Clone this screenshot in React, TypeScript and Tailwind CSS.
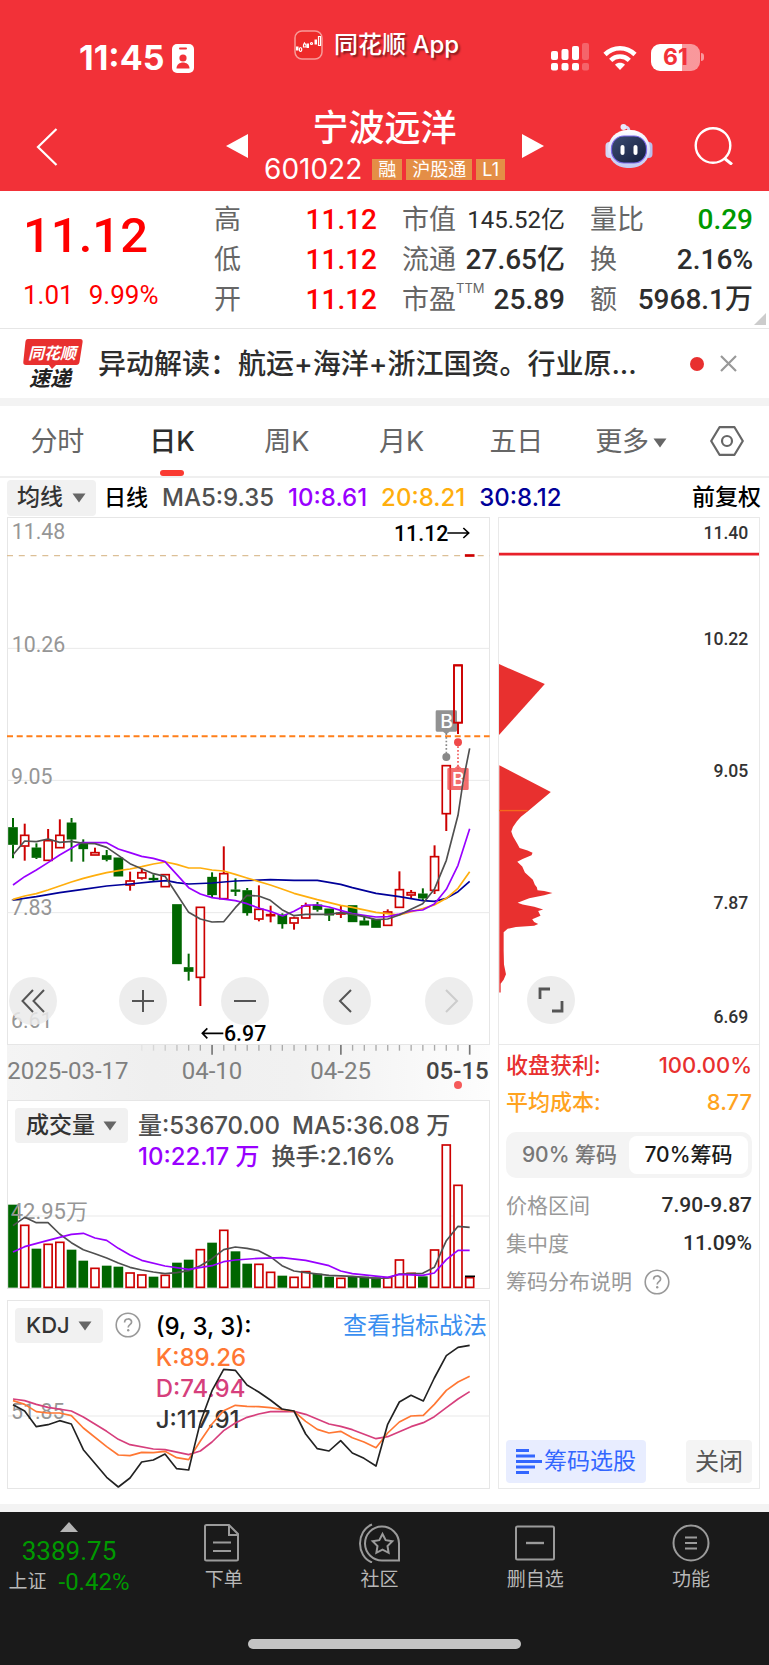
import React from "react";

type Candle = { up: boolean; top: number; bottom: number; high?: number; low?: number };
type Bar = { up: boolean; top: number };

const RED = "#cc0000";
const GREEN = "#006600";
const STEP = 35.13;
const xAt = (i: number) => 39 + STEP * i;

const up = (top: number, bottom: number, high?: number, low?: number): Candle => ({ up: true, top, bottom, high, low });
const down = (top: number, bottom: number, high?: number, low?: number): Candle => ({ up: false, top, bottom, high, low });

const candles: Candle[] = [
  down(142, 194, 114, 235), up(165, 199, 131, 242), down(203, 233, 190, 237), up(181, 242, 147), up(165, 204, 118),
  down(128, 178, 114, 245), down(192, 207, 178, 245), up(217, 226, 203), down(226, 239, 210, 244), down(233, 289),
  up(302, 316, 275, 332), up(277, 295, 265, 299), down(294, 299, 283, 303), up(283, 321), down(373, 552),
  down(562, 575, 521, 602), up(381, 593, undefined, 678), down(291, 345, 277, 351), up(280, 357, 199), down(329, 334, 295, 348),
  down(331, 399, 324, 407), up(387, 418, 316, 424), up(403, 408, 377, 427), down(404, 432, 400, 446), up(413, 430, 410, 449),
  up(377, 415, 368), down(374, 389, 366, 395), down(386, 406, undefined, 423), up(399, 403, 378, 414), down(376, 426),
  down(422, 436, 410), down(418, 443), up(395, 437, 388), up(328, 383, 274), up(337, 346, 330, 355),
  down(341, 355, 325, 362), up(229, 332, 196, 342), up(-44, 102, undefined, 153), up(-344, -171, undefined, -138), up(-676, -671),
];

const vol = (spec: string): Bar[] =>
  spec.split(" ").map((s) => ({ up: s[0] === "r", top: Number(s.slice(1)) }));

const volumes = vol(
  "g342 r403 g474 r460 r454 g477 g510 r532 g525 g528 r546 r552 g558 r553 g516 g507 r476 g456 r418 g482 g519 r520 r544 g555 r559 r542 g549 g558 r562 g558 g558 g560 r560 r507 r547 g557 r477 r162 r283 r560"
);

const ma5 = "39,224 74,183 109,185 144,177 179,187 214,184 250,190 285,191 320,202 355,226 390,251 425,266 460,281 495,289 530,342 566,397 601,417 636,426 671,425 706,383 741,346 776,348 811,361 846,389 882,407 917,403 987,403 1022,398 1057,403 1092,410 1128,419 1163,417 1198,405 1233,388 1268,371 1303,328 1339,241 1374,106 1390,0 1409,-95";
const ma10 = "39,315 74,290 109,270 144,248 179,225 214,205 243,188 320,188 355,207 390,218 425,229 460,235 495,245 530,283 566,323 601,342 636,353 706,362 741,371 776,384 811,394 848,408 882,394 917,375 952,375 987,381 1022,391 1057,401 1092,406 1128,411 1163,410 1198,402 1233,393 1268,390 1303,372 1339,328 1374,256 1409,146";
const ma20 = "39,358 74,348 109,341 144,330 179,318 214,306 250,295 285,286 320,278 355,272 390,267 425,260 460,252 497,246 530,253 566,264 601,264 636,270 671,273 706,283 741,294 811,315 846,327 882,340 952,359 1022,376 1057,382 1128,397 1163,401 1198,405 1268,386 1303,375 1339,355 1374,325 1409,275";
const ma30 = "39,360 109,350 179,338 249,328 320,318 390,312 460,305 500,302 530,308 566,312 636,309 706,303 811,299 882,301 952,301 1022,313 1057,323 1128,340 1198,350 1268,362 1303,364 1339,355 1374,335 1409,304";
const vol5 = "39,405 74,380 109,396 144,396 179,430 214,456 250,477 285,489 320,502 355,517 390,530 425,538 460,544 495,549 530,546 566,540 601,525 636,504 671,477 706,469 741,473 776,480 811,498 846,525 882,541 917,546 987,554 1057,557 1128,563 1163,562 1198,550 1268,548 1303,530 1339,450 1374,407 1409,410";
const vol10 = "39,484 74,468 144,449 214,431 250,428 285,442 320,449 355,473 390,493 425,509 495,526 566,536 636,525 671,513 706,508 776,503 846,501 917,509 987,525 1022,541 1057,549 1163,560 1198,551 1268,554 1303,547 1339,507 1374,479 1409,479";
const kdjJ = "39,342 74,361 109,408 144,402 179,390 214,400 250,477 320,560 355,589 390,562 425,514 460,508 495,490 530,534 566,538 580,480 601,395 636,300 671,236 706,239 741,283 776,304 811,328 846,355 882,361 917,430 952,474 987,481 1022,450 1057,487 1092,503 1128,526 1163,401 1198,334 1233,314 1270,331 1303,262 1339,195 1374,170 1409,164";
const kdjK = "39,330 74,341 109,363 144,367 179,367 214,375 250,412 320,468 355,493 390,495 425,485 460,486 495,482 530,501 566,507 601,451 636,400 671,360 706,344 741,347 776,348 811,351 882,362 917,392 952,416 987,427 1022,422 1057,441 1092,454 1128,471 1163,427 1198,394 1233,376 1270,374 1303,341 1339,299 1374,274 1409,257";
const kdjD = "39,325 74,330 109,341 144,350 214,361 250,379 320,422 355,446 390,462 460,475 495,477 566,492 601,481 636,454 671,420 706,397 741,380 776,370 811,363 882,362 917,371 987,400 1022,407 1057,417 1128,444 1163,438 1233,408 1270,396 1303,378 1339,351 1374,325 1409,303";
const chips = "25,740 180,818 110,875 90,890 78,903 66,920 61,933 66,947 80,970 86,981 110,988 125,995 122,1002 95,1013 79,1021 94,1035 102,1052 126,1073 132,1088 138,1095 140,1104 160,1106 185,1112 160,1118 115,1127 80,1140 95,1145 130,1152 157,1160 142,1164 149,1178 124,1188 130,1196 142,1202 130,1207 75,1211 50,1216 38,1226 38,1280 39,1320 45,1348 38,1364 29,1376 29,1401 25,1401";

const Line = ({ points, color, w = 5 }: { points: string; color: string; w?: number }) => (
  <polyline points={points} fill="none" stroke={color} strokeWidth={w} strokeLinejoin="round" />
);

const Caret = ({ className }: { className?: string }) => (
  <svg viewBox="0 0 14 10" className={className} aria-hidden="true">
    <path d="M0.5 0.5h13L7 9.5z" fill="currentColor" />
  </svg>
);

const HelpIcon = () => (
  <svg viewBox="0 0 26 26" className="size-[26px]" aria-hidden="true">
    <circle cx="13" cy="13" r="11.8" fill="none" stroke="#999" strokeWidth="1.6" />
    <path d="M9.6 10.4c0-4.6 7-4.4 7-.4 0 2.6-3.4 2.7-3.4 5.4" fill="none" stroke="#999" strokeWidth="1.7" />
    <circle cx="13.2" cy="18.3" r="1.2" fill="#999" />
  </svg>
);

function StatusBar() {
  return (
    <div className="flex h-[85px] items-start pr-[65px] pl-[79px]">
      <div className="flex w-[215px] items-center gap-2 pt-[42px]">
        <span className="text-[34px] leading-8 font-bold">11:45</span>
        <svg viewBox="0 0 22 29" className="h-[29px] w-[22px]" aria-hidden="true">
          <rect width="22" height="29" rx="5" fill="#fff" />
          <rect x="7" y="3.5" width="8" height="2" rx="1" fill="#f23138" />
          <circle cx="11" cy="14" r="3.6" fill="#f23138" />
          <path d="M4.5 24.5c0-8 13-8 13 0z" fill="#f23138" />
        </svg>
      </div>
      <div className="flex items-center gap-[11px] pt-[30px]">
        <svg viewBox="0 0 29 30" className="h-[30px] w-[29px]" aria-hidden="true">
          <rect x="1" y="1" width="27" height="28" rx="7" fill="#ee2a2a" stroke="#f79a98" strokeWidth="1.5" />
          <g fill="none" stroke="#fff" strokeWidth="1.2">
            <path d="M6.500 17.500a1.200 2 0 1 0 .1 0M10.500 13l1.500 2v2h-2.500v-2z" />
            <path d="M24.500 6.500h2v9h-2z" />
            <circle cx="17.500" cy="13.500" r="1" />
          </g>
          <rect x="2" y="16.500" width="2.500" height="4" fill="#fff" />
          <rect x="12.500" y="13.500" width="2.500" height="4.500" fill="#fff" />
          <rect x="20.500" y="9.500" width="2.500" height="5" fill="#fff" />
        </svg>
        <span className="text-[24px] leading-7 font-medium [text-shadow:2px_2px_2px_rgba(0,0,0,0.45)]">同花顺 App</span>
      </div>
      <div className="flex flex-1 items-center justify-end gap-[14px] pt-[43px]">
        <svg viewBox="0 0 38 28" className="h-7 w-[38px]" fill="#fff" aria-hidden="true">
          <rect x="0" y="8" width="7" height="9" rx="2" />
          <rect x="10.500" y="6" width="7" height="11" rx="2" />
          <rect x="21" y="3" width="7" height="14" rx="2" />
          <rect x="31" y="0" width="7" height="17" rx="2" opacity=".25" />
          <rect x="0" y="20" width="7" height="7.500" rx="2" />
          <rect x="10.500" y="20" width="7" height="7.500" rx="2" />
          <rect x="21" y="20" width="7" height="7.500" rx="2" />
          <rect x="31" y="20" width="7" height="7.500" rx="2" opacity=".25" />
        </svg>
        <svg viewBox="0 0 34 25" className="h-[25px] w-[34px]" fill="none" stroke="#fff" strokeWidth="4.600" aria-hidden="true">
          <path d="M2 9.500C10.500 1.200 23.500 1.200 32 9.500" />
          <path d="M7.700 15.300c5.300-5 13.300-5 18.600 0" />
          <path d="M17 25l-5-5.300c2.800-2.600 7.200-2.600 10 0z" fill="#fff" stroke="none" />
        </svg>
        <div className="flex items-center gap-[1px]">
          <div className="flex h-[27px] w-[49px] items-center justify-center rounded-[9px] bg-linear-to-r from-white from-63% to-white/50 to-63% text-[23px] leading-none font-bold text-[#f23138]">
            61
          </div>
          <div className="h-2 w-[3px] rounded-r bg-white/50" />
        </div>
      </div>
    </div>
  );
}

function Robot() {
  return (
    <svg viewBox="0 0 48 46" className="h-[46px] w-12" aria-hidden="true">
      <defs>
        <linearGradient id="shell" x1="0" y1="0" x2="0" y2="1">
          <stop offset="0" stopColor="#ffffff" />
          <stop offset="1" stopColor="#c3c9f2" />
        </linearGradient>
        <linearGradient id="visor" x1="0" y1="0" x2="1" y2="1">
          <stop offset="0" stopColor="#3c4d72" />
          <stop offset="1" stopColor="#131c3c" />
        </linearGradient>
      </defs>
      <path d="M24 9c0-4-1-5-5-5" fill="none" stroke="#d8daf5" strokeWidth="3" />
      <circle cx="18.500" cy="4" r="3" fill="#e9eafc" />
      <rect x="0.500" y="19" width="8" height="16" rx="4" fill="#d4d6f3" />
      <rect x="39.500" y="19" width="8" height="16" rx="4" fill="#b9bfec" />
      <rect x="3" y="7" width="42" height="38" rx="19" fill="url(#shell)" />
      <rect x="6.500" y="13" width="35" height="27" rx="12.500" fill="url(#visor)" stroke="#7a68e8" strokeWidth="1.200" />
      <rect x="15.500" y="22" width="4" height="10" rx="2" fill="#fff" />
      <rect x="28.500" y="22" width="4" height="10" rx="2" fill="#fff" />
    </svg>
  );
}

function Header() {
  const tags = ["融", "沪股通", "L1"];
  return (
    <header className="bg-[#f23138] text-white">
      <StatusBar />
      <div className="flex h-[106px] items-center justify-between pr-9 pl-[36px]">
        <button aria-label="返回" className="w-[158px] pt-[17px]">
          <svg viewBox="0 0 22 38" className="h-[38px] w-[22px]" fill="none" stroke="#fff" strokeWidth="2.200" aria-hidden="true">
            <path d="M20.500 1L2 19l18.500 18" />
          </svg>
        </button>
        <div className="flex items-center gap-3">
          <button aria-label="上一只" className="pt-4">
            <svg viewBox="0 0 22 24" className="h-6 w-[22px]" aria-hidden="true"><path d="M22 0v24L0 12z" fill="#fff" /></svg>
          </button>
          <div className="flex w-[250px] flex-col items-center pt-4">
            <h1 className="text-[36px] leading-[46px] font-medium">宁波远洋</h1>
            <div className="flex items-center gap-1">
              <span className="mr-[6px] text-[28px] leading-9">601022</span>
              {tags.map((t) => (
                <span key={t} className="bg-[#e48e46] px-[6px] text-[18px] leading-[21px]">{t}</span>
              ))}
            </div>
          </div>
          <button aria-label="下一只" className="pt-4">
            <svg viewBox="0 0 22 24" className="h-6 w-[22px]" aria-hidden="true"><path d="M0 0v24l22-12z" fill="#fff" /></svg>
          </button>
        </div>
        <div className="flex w-[158px] items-center justify-end gap-[41px] pt-[16px]">
          <button aria-label="智能助手"><Robot /></button>
          <button aria-label="搜索">
            <svg viewBox="0 0 39 38" className="h-[38px] w-[39px]" fill="none" stroke="#fff" strokeWidth="2.400" aria-hidden="true">
              <circle cx="19" cy="18.500" r="17.300" />
              <path d="M30 31l8 6.500" strokeWidth="3" />
            </svg>
          </button>
        </div>
      </div>
    </header>
  );
}

function Quote() {
  const num = "font-['Roboto','Noto_Sans_CJK_SC',sans-serif]";
  const columns: { label: string; sup?: string; value: string; cls: string }[][] = [
    [
      { label: "高", value: "11.12", cls: "text-[28px] font-medium text-[#ff0000]" },
      { label: "低", value: "11.12", cls: "text-[28px] font-medium text-[#ff0000]" },
      { label: "开", value: "11.12", cls: "text-[28px] font-medium text-[#ff0000]" },
    ],
    [
      { label: "市值", value: "145.52亿", cls: "text-[24px] text-[#2d2d2d]" },
      { label: "流通", value: "27.65亿", cls: "text-[28px] font-medium text-[#2d2d2d]" },
      { label: "市盈", sup: "TTM", value: "25.89", cls: "text-[28px] font-medium text-[#2d2d2d]" },
    ],
    [
      { label: "量比", value: "0.29", cls: "text-[28px] font-medium text-[#009900]" },
      { label: "换", value: "2.16%", cls: "text-[28px] font-medium text-[#2d2d2d]" },
      { label: "额", value: "5968.1万", cls: "text-[28px] font-medium text-[#2d2d2d]" },
    ],
  ];
  return (
    <section className="relative flex h-[138px] border-b border-[#e6e6e6] pt-[9px] pr-4 pl-[23px]">
      <div className={"w-[191px] text-[#ff0000] " + num}>
        <div className="pt-[7px] text-[49px] leading-[58px] font-medium">11.12</div>
        <div className="flex gap-[15px] pt-3 text-[26px] leading-9">
          <span>1.01</span>
          <span>9.99%</span>
        </div>
      </div>
      <div className="flex flex-1 gap-[25px]">
        {columns.map((rows, i) => (
          <dl key={i} className="flex-1">
            {rows.map((r) => (
              <div key={r.label} className="flex h-10 items-center justify-between whitespace-nowrap">
                <dt className="text-[27px] leading-10 text-[#666]">
                  {r.label}
                  {r.sup && <sup className="-top-4 text-[13px] leading-none">{r.sup}</sup>}
                </dt>
                <dd className={num + " leading-10 " + r.cls}>{r.value}</dd>
              </div>
            ))}
          </dl>
        ))}
      </div>
      <svg viewBox="0 0 12 12" className="absolute right-[3px] bottom-[3px] size-3" aria-hidden="true">
        <path d="M12 0v12H0z" fill="#ccc" />
      </svg>
    </section>
  );
}

function News() {
  return (
    <section className="flex h-[77px] items-center border-b-8 border-[#f3f3f3] pr-8 pl-[23px]">
      <svg viewBox="0 0 60 50" className="h-[50px] w-[60px] shrink-0 overflow-visible" aria-hidden="true">
        <path d="M5 0h52q3 0 2.600 3L56.500 23q-.4 3-3.400 3H33l-4 4-3-4H3q-3 0-2.700-3L2.400 3Q2.700 0 5 0z" fill="#e8302f" />
        <text x="29" y="19.500" textAnchor="middle" className="font-['Noto_Sans_CJK_SC',sans-serif] text-[16px] font-bold italic" fill="#fff">同花顺</text>
        <text x="27" y="47" textAnchor="middle" className="font-['Noto_Sans_CJK_SC',sans-serif] text-[21px] font-bold italic" fill="#222">速递</text>
      </svg>
      <a href="#news" className="ml-[15px] flex-1 truncate text-[28px] leading-10 font-medium text-[#2d2d2d]">
        异动解读：航运+海洋+浙江国资。行业原...
      </a>
      <span className="mr-4 size-[14px] rounded-full bg-[#e8302f]" />
      <button aria-label="关闭资讯">
        <svg viewBox="0 0 17 17" className="size-[17px]" stroke="#999" strokeWidth="2.200" aria-hidden="true">
          <path d="M1 1l15 15M16 1L1 16" />
        </svg>
      </button>
    </section>
  );
}

function Tabs() {
  const tabs = ["分时", "日K", "周K", "月K", "五日"];
  return (
    <nav className="flex h-[72px] border-b-2 border-[#efefef] text-[27px] text-[#666]">
      {tabs.map((t) => (
        <button
          key={t}
          className={
            "relative flex-[3] pt-[3px] " +
            (t === "日K"
              ? "font-medium text-[#2d2d2d] after:absolute after:bottom-0 after:left-1/2 after:h-[6px] after:w-6 after:-translate-x-1/2 after:rounded-[3px] after:bg-[#fa3a31]"
              : "")
          }
        >
          {t}
        </button>
      ))}
      <button className="flex flex-[3] items-center justify-center gap-1 pt-[3px]">
        更多 <Caret className="h-[10px] w-[14px]" />
      </button>
      <button aria-label="设置" className="flex flex-[2] items-center justify-center pr-1">
        <svg viewBox="0 0 34 30" className="h-[30px] w-[34px]" fill="none" stroke="#666" strokeWidth="2.200" strokeLinejoin="round" aria-hidden="true">
          <path d="M9.500 1.200h15L32.800 15l-8.300 13.800h-15L1.200 15z" />
          <circle cx="17" cy="15" r="5" />
        </svg>
      </button>
    </nav>
  );
}

function Legend() {
  return (
    <div className="flex h-[39px] items-center pr-2 pl-[7px] text-[24px] font-medium whitespace-nowrap">
      <button className="flex h-9 w-[89px] items-center justify-center gap-[9px] rounded bg-[#f1f1f1] text-[23px] text-[#333]">
        均线 <Caret className="h-[10px] w-[14px] text-[#666]" />
      </button>
      <span className="ml-2 text-[22px] text-black">日线</span>
      <span className="ml-[14px] text-[#505050]">MA5:9.35</span>
      <span className="ml-[14px] text-[#9900ff]">10:8.61</span>
      <span className="ml-[14px] text-[#ffae0d]">20:8.21</span>
      <span className="ml-[14px] text-[#000099]">30:8.12</span>
      <span className="ml-auto text-[23px] text-black">前复权</span>
    </div>
  );
}

const axisText = "font-['Roboto','Noto_Sans_CJK_SC',sans-serif]";

function PriceChart() {
  const round = "flex size-12 items-center justify-center rounded-full bg-[#eaeaea]/85 text-[#555]";
  const icon = { viewBox: "0 0 24 24", fill: "none", stroke: "currentColor", strokeWidth: 2, className: "size-6", "aria-hidden": true } as const;
  return (
    <div className="relative">
      <svg viewBox="21 1551 1449 1584" className="block w-full" role="img" aria-label="日K线图">
        <rect x="22.500" y="1552.500" width="1446" height="1581" fill="#fff" stroke="#e6e6e6" strokeWidth="3" />
        <path d="M21 1945h1448M21 2341h1448M21 2738h1448" stroke="#e9e9e9" strokeWidth="3" />
        <path d="M21 1667h1448" stroke="#dcbf96" strokeWidth="4" strokeDasharray="18 17.300" />
        <g className={axisText} fontSize="64" fill="#969696">
          <text x="35" y="1618">11.48</text>
          <text x="35" y="1956">10.26</text>
          <text x="33" y="2352">9.05</text>
          <text x="33" y="2746">7.83</text>
          <text x="33" y="3085">6.61</text>
        </g>
        <g transform="translate(0 2340)">
          {candles.map((c, i) => {
            const x = xAt(i);
            const color = c.up ? RED : GREEN;
            return (
              <g key={i} stroke={color} strokeWidth="6">
                {c.high !== undefined && <path d={`M${x} ${c.high}V${c.top}`} />}
                {c.low !== undefined && <path d={`M${x} ${c.bottom}V${c.low}`} />}
                <rect
                  x={x - 12} y={c.top + (c.up ? 1 : 2)} width="24" height={Math.max(c.bottom - c.top - (c.up ? 2 : 4), 2)}
                  fill={c.up ? "#fff" : GREEN} strokeWidth="5"
                />
              </g>
            );
          })}
          <Line points={ma30} color="#000099" />
          <Line points={ma20} color="#ffae0d" />
          <Line points={ma10} color="#9900ff" />
        </g>
        <path d="M21 2209h1448" stroke="#ff7f1a" strokeWidth="6" strokeDasharray="18 11.200" />
        <path d="M1339 2200v62" stroke="#888" strokeWidth="5" strokeDasharray="5 6" />
        <circle cx="1339" cy="2271" r="12" fill="#888" />
        <path d="M1311 2131h56q4 0 4 4v56q0 4-4 4h-18l-10 8-10-8h-18q-4 0-4-4v-56q0-4 4-4z" fill="#777" opacity=".8" />
        <path d="M1374 2228v80" stroke="#f05a5a" strokeWidth="5" strokeDasharray="5 6" />
        <circle cx="1374" cy="2227" r="12" fill="#f04a4a" />
        <path d="M1346 2304h18l10-8 10 8h18q4 0 4 4v58q0 4-4 4h-56q-4 0-4-4v-58q0-4 4-4z" fill="#f04a4a" opacity=".8" />
        <rect x="1362" y="1995" width="24" height="173" fill="none" stroke={RED} strokeWidth="5" />
        <g className="font-['Inter',sans-serif]" fontSize="58" fontWeight="500" fill="#fff" textAnchor="middle">
          <text x="1340" y="2185">B</text>
          <text x="1375" y="2357">B</text>
        </g>
        <g transform="translate(0 2340)"><Line points={ma5} color="#505050" /></g>
        <g className={axisText} fontSize="64" fontWeight="500" fill="#000">
          <text x="1182" y="1624">11.12</text>
          <text x="672" y="3124">6.97</text>
        </g>
        <path d="M1342 1599h64M1390 1584l16 15-16 15M670 3100h-62M622 3085l-15 15 15 15" fill="none" stroke="#000" strokeWidth="5" />
      </svg>
      <div className="absolute right-[17px] bottom-5 left-[2px] flex justify-between">
        <button aria-label="最早" className={round + " mr-2"}><svg {...icon}><path d="M12 1L1.500 12 12 23M23 1L12.500 12 23 23" /></svg></button>
        <button aria-label="放大" className={round}><svg {...icon}><path d="M12 1v22M1 12h22" /></svg></button>
        <button aria-label="缩小" className={round}><svg {...icon}><path d="M1 12h22" /></svg></button>
        <button aria-label="向前" className={round}><svg {...icon}><path d="M16 1L5 12l11 11" /></svg></button>
        <button aria-label="向后" disabled className={round}><svg {...icon} stroke="#ccc"><path d="M9 1l11 11L9 23" /></svg></button>
      </div>
    </div>
  );
}

function DateAxis() {
  return (
    <svg viewBox="21 795 1449 165" className="block w-full" role="img" aria-label="日期">
      <defs>
        <linearGradient id="wheel" x1="0" y1="0" x2="1" y2="0">
          <stop offset="0" stopColor="#f4f4f4" />
          <stop offset=".3" stopColor="#efefef" />
          <stop offset=".6" stopColor="#f1f1f1" />
          <stop offset="1" stopColor="#fdfdfd" />
        </linearGradient>
      </defs>
      <rect x="21" y="795" width="1449" height="165" fill="url(#wheel)" />
      {Array.from({ length: 29 }, (_, k) => {
        const i = k + 11;
        const major = i === 17 || i === 28 || i === 39;
        return (
          <path key={i} d={`M${xAt(i)} 795v${major ? 29 : 17}`} stroke={major ? "#777" : "#aaa"} strokeWidth={major ? 5 : 4} opacity={Math.min(1, (k + 1) / 6)} />
        );
      })}
      <g className={axisText} fontSize="72" fill="#808080">
        <text x="22" y="896">2025-03-17</text>
        <text x="636" y="896" textAnchor="middle">04-10</text>
        <text x="1022" y="896" textAnchor="middle">04-25</text>
        <text x="1466" y="896" textAnchor="end" fill="#444" fontWeight="500">05-15</text>
      </g>
      <circle cx="1374" cy="915" r="12" fill="#f55a5a" />
    </svg>
  );
}

const picker = "flex h-[35px] items-center gap-2 rounded bg-[#f1f1f1] px-[11px] font-medium text-[#333]";

function VolumePanel() {
  return (
    <section className="relative h-[189px]">
      <svg viewBox="21 28 1449 567" preserveAspectRatio="none" className="absolute inset-0 size-full" role="img" aria-label="成交量图">
        <rect x="22.500" y="29.500" width="1446" height="564" fill="#fff" stroke="#e6e6e6" strokeWidth="3" />
        <path d="M21 376h1448" stroke="#e9e9e9" strokeWidth="3" />
        {volumes.map((b, i) =>
          b.up ? (
            <rect key={i} x={xAt(i) - 12} y={b.top + 1} width="24" height={589 - b.top} fill="#fff" stroke={RED} strokeWidth="5" />
          ) : (
            <rect key={i} x={xAt(i) - 14.5} y={b.top} width="29" height={591 - b.top} fill={GREEN} />
          )
        )}
        <path d="M1395 557h30" stroke="#000" strokeWidth="5" />
        <text x="32" y="386" className={axisText} fontSize="66" fill="#969696">42.95万</text>
        <Line points={vol5} color="#505050" />
        <Line points={vol10} color="#9900ff" />
      </svg>
      <div className="relative flex items-start pt-2 pl-2 text-[24px] leading-[31px] font-medium text-[#505050]">
        <button className={picker + " text-[23px]"}>
          成交量 <Caret className="h-[10px] w-[14px] text-[#666]" />
        </button>
        <div className="ml-[10px] pt-[2px] whitespace-nowrap">
          <p className="flex gap-3"><span>量:53670.00</span><span>MA5:36.08 万</span></p>
          <p className="flex gap-3"><span className="text-[#9900ff]">10:22.17 万</span><span>换手:2.16%</span></p>
        </div>
      </div>
    </section>
  );
}

function KdjPanel() {
  return (
    <section className="relative mt-[11px] h-[189px]">
      <svg viewBox="21 28 1449 567" preserveAspectRatio="none" className="absolute inset-0 size-full" role="img" aria-label="KDJ指标图">
        <rect x="22.500" y="29.500" width="1446" height="564" fill="#fff" stroke="#e6e6e6" strokeWidth="3" />
        <path d="M21 376h1448" stroke="#e9e9e9" strokeWidth="3" />
        <text x="33" y="386" className={axisText} fontSize="64" fill="#969696">51.85</text>
      </svg>
      <div className="relative flex items-start pt-2 pl-2 text-[24px] leading-[31px] font-medium">
        <button className={picker + " text-[22px]"}>
          KDJ <Caret className="h-[10px] w-[14px] text-[#666]" />
        </button>
        <button aria-label="指标说明" className="ml-3 pt-1"><HelpIcon /></button>
        <div className="ml-[15px] pt-[3px]">
          <p className="text-black">(9, 3, 3):</p>
          <p className="text-[#ff7733]">K:89.26</p>
          <p className="text-[#d63f7c]">D:74.94</p>
          <p className="text-[#333]">J:117.91</p>
        </div>
        <a href="#kdj" className="mr-[3px] ml-auto pt-[2px] text-[24px] font-normal text-[#3a8ff0]">查看指标战法</a>
      </div>
      <svg viewBox="21 28 1449 567" preserveAspectRatio="none" className="pointer-events-none absolute inset-0 size-full" aria-hidden="true">
        <Line points={kdjD} color="#d63f7c" />
        <Line points={kdjK} color="#ff7733" />
        <Line points={kdjJ} color="#222" />
      </svg>
    </section>
  );
}

function ChipPanel() {
  const labels: [string, number][] = [["11.40", 81], ["10.22", 391], ["9.05", 773], ["7.87", 1158], ["6.69", 1490]];
  return (
    <aside className="flex flex-col border border-[#e9e9e9]">
      <div className="relative border-b border-[#e9e9e9]">
        <svg viewBox="24 21 783 1530" preserveAspectRatio="none" className="block h-[526px] w-full" role="img" aria-label="筹码分布">
          <path d="M24 126h786" stroke="#e8202a" strokeWidth="8" />
          <path d="M24 446l138 58L24 652z" fill="#e8302f" />
          <polygon points={chips} fill="#e8302f" />
          <path d="M24 872h86" stroke="#f56a1c" strokeWidth="4" />
          <g className={axisText} fontSize="53" fontWeight="500" fill="#333" textAnchor="end">
            {labels.map(([t, y]) => <text key={t} x="775" y={y}>{t}</text>)}
          </g>
        </svg>
        <button aria-label="全屏" className="absolute bottom-5 left-7 flex size-12 items-center justify-center rounded-full bg-[#ededed]">
          <svg viewBox="0 0 26 26" className="size-[26px]" fill="none" stroke="#555" strokeWidth="2.800" aria-hidden="true">
            <path d="M2 12V2h10M24 14v10H14" />
          </svg>
        </button>
      </div>
      <div className="flex flex-1 flex-col px-[7px] pb-[5px] text-[21px]">
        <dl className="pt-[2px] text-[22px] font-medium">
          <div className="flex h-[37px] items-center justify-between text-[#e8302f]"><dt>收盘获利:</dt><dd>100.00%</dd></div>
          <div className="flex h-[37px] items-center justify-between text-[#ffa31f]"><dt>平均成本:</dt><dd>8.77</dd></div>
        </dl>
        <div className="mt-[11px] flex h-[46px] rounded-[10px] bg-[#f4f4f4] p-1 font-medium whitespace-nowrap">
          <button className="flex-1 text-[#777]">90% 筹码</button>
          <button className="flex-1 rounded-[8px] bg-white text-[#1a1a1a]">70%筹码</button>
        </div>
        <dl className="mt-[9px] text-[#999]">
          <div className="flex h-[38px] items-center justify-between"><dt>价格区间</dt><dd className={axisText + " font-medium text-[#2d2d2d]"}>7.90-9.87</dd></div>
          <div className="flex h-[38px] items-center justify-between"><dt>集中度</dt><dd className={axisText + " font-medium text-[#2d2d2d]"}>11.09%</dd></div>
        </dl>
        <button className="flex h-[38px] items-center gap-3 self-start text-[#999]">筹码分布说明 <HelpIcon /></button>
        <div className="mt-auto flex h-[43px] justify-between">
          <button className="flex items-center rounded bg-[#e8edff] px-[10px] text-[23px] text-[#3366ff]">
            <svg viewBox="0 0 26 25" className="h-[25px] w-[26px]" fill="#3366ff" aria-hidden="true">
              <path d="M0 0h13v3H0zM0 5.500h19v3H0zM0 11h26v3H0zM0 16.500h19v3H0zM0 22h13v3H0z" />
            </svg>
            <span className="ml-[2px]">筹码选股</span>
          </button>
          <button className="rounded bg-[#f4f4f4] px-[9px] text-[24px] text-[#555]">关闭</button>
        </div>
      </div>
    </aside>
  );
}

function BottomBar() {
  const stroke = { fill: "none", stroke: "#9b9b9b", strokeWidth: 2, className: "h-10 w-[42px]", viewBox: "0 0 42 40", "aria-hidden": true } as const;
  const items = [
    { label: "下单", icon: <svg {...stroke}><path d="M2 3.500Q2 2 3.500 2H26l9 9v25q0 1.500-1.500 1.500h-30Q2 37.500 2 36zM26 2v10h9M10 19.500h18M10 28h18" /></svg> },
    { label: "社区", icon: <svg {...stroke}><path d="M13 1.500C-3 8-3 33 13 39.500M40 37.500H23.500a17 17 0 1 1 16.500-17z" /><path d="M23.500 11l3.200 6.200 6.600 1-4.800 4.800 1.100 6.800-6.100-3.200-6.100 3.200 1.100-6.800-4.800-4.800 6.600-1z" /></svg> },
    { label: "删自选", icon: <svg {...stroke}><rect x="2" y="3.500" width="38" height="33" rx="1.500" /><path d="M12 20h18" strokeWidth="2.400" /></svg> },
    { label: "功能", icon: <svg {...stroke}><circle cx="21" cy="20" r="17.500" /><path d="M15 14.500h12M15 20h12M15 25.500h12" /></svg> },
  ];
  return (
    <footer className="flex min-h-[153px] flex-col bg-[#1a1a1a] pb-4">
      <nav className="flex text-[19px] text-[#b8b8b8]">
        <button className="flex w-[146px] flex-col items-center pt-[10px] pr-2">
          <svg viewBox="0 0 18 10" className="h-[10px] w-[18px]" aria-hidden="true"><path d="M9 0l9 10H0z" fill="#b5b5b5" /></svg>
          <span className={axisText + " text-[26px] leading-[38px] text-[#009900]"}>3389.75</span>
          <span className="flex items-center gap-3 leading-6">
            上证 <span className={axisText + " text-[24px] text-[#009900]"}>-0.42%</span>
          </span>
        </button>
        {items.map((it) => (
          <button key={it.label} className="flex flex-1 flex-col items-center gap-[3px] pt-[11px] leading-7">
            {it.icon}
            {it.label}
          </button>
        ))}
      </nav>
      <div className="mx-auto mt-auto h-[10px] w-[273px] rounded-full bg-[#c4c4c4]" />
    </footer>
  );
}

export default function App() {
  return (
    <div className="w-full bg-white font-['Inter','Noto_Sans_CJK_SC',sans-serif]">
      <Header />
      <Quote />
      <News />
      <Tabs />
      <Legend />
      <main className="grid grid-cols-[483fr_262fr] gap-2 pr-[9px] pb-[15px] pl-[7px]">
        <div>
          <PriceChart />
          <DateAxis />
          <VolumePanel />
          <KdjPanel />
        </div>
        <ChipPanel />
      </main>
      <div className="h-2 bg-[#f3f3f3]" />
      <BottomBar />
    </div>
  );
}
